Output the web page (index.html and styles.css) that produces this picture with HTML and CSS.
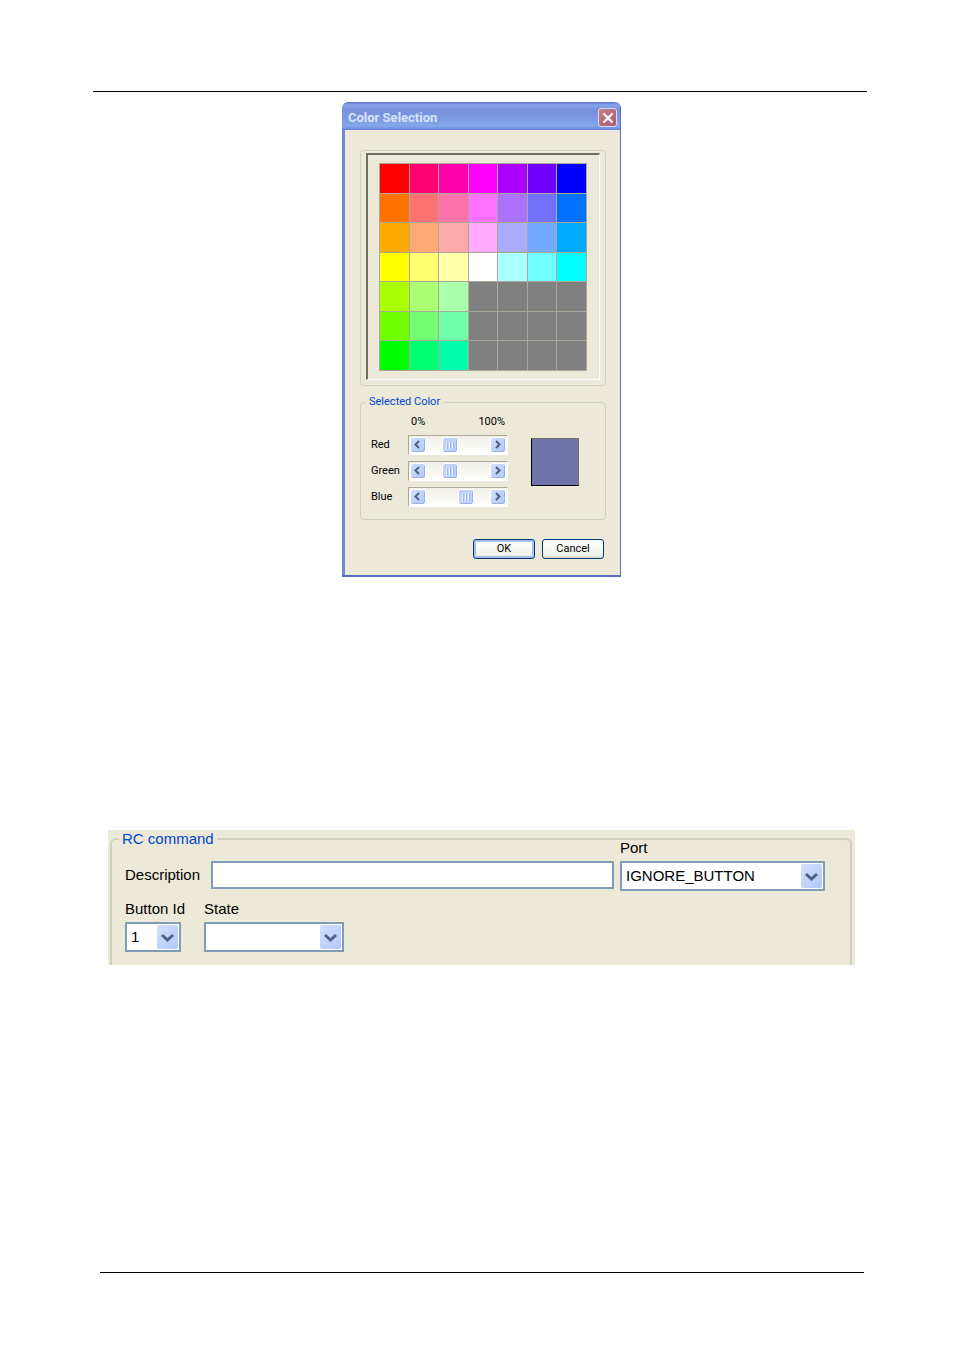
FILE: index.html
```html
<!DOCTYPE html>
<html lang="en">

<head>
    <meta charset="utf-8">
    <title>Color Selection</title>
    <link rel="stylesheet" href="styles.css">
</head>

<body>
    <header class="page-header"></header>
    <main class="page">
        <form class="dialog">
            <div class="title-bar">
                <h1>Color Selection</h1>
                <button type="button" class="close" aria-label="Close">
                    <svg viewBox="0 0 12 12" width="12" height="12">
                        <path d="M1.5 1.5l9 9M10.5 1.5l-9 9" stroke="#fff" stroke-width="2.2" />
                    </svg>
                </button>
            </div>
            <div class="dialog-body">
                <fieldset class="palette-group">
                    <div class="palette-frame">
                        <div class="palette" id="palette"></div>
                    </div>
                </fieldset>
                <fieldset class="selected-group">
                    <legend>Selected Color</legend>
                    <div class="channels">
                        <div class="scale"><span>0%</span><span>100%</span></div>
                        <label for="red">Red</label>
                        <div class="scrollbar">
                            <button type="button" aria-label="Less red"><svg viewBox="0 0 14 14"><path d="M8 3L4.500 6.500 8 10" /></svg></button>
                            <input type="range" id="red" min="0" max="100" value="33">
                            <button type="button" aria-label="More red"><svg viewBox="0 0 14 14"><path d="M5 3l3.500 3.500L5 10" /></svg></button>
                        </div>
                        <label for="green">Green</label>
                        <div class="scrollbar">
                            <button type="button" aria-label="Less green"><svg viewBox="0 0 14 14"><path d="M8 3L4.500 6.500 8 10" /></svg></button>
                            <input type="range" id="green" min="0" max="100" value="33">
                            <button type="button" aria-label="More green"><svg viewBox="0 0 14 14"><path d="M5 3l3.500 3.500L5 10" /></svg></button>
                        </div>
                        <label for="blue">Blue</label>
                        <div class="scrollbar">
                            <button type="button" aria-label="Less blue"><svg viewBox="0 0 14 14"><path d="M8 3L4.500 6.500 8 10" /></svg></button>
                            <input type="range" id="blue" min="0" max="100" value="66">
                            <button type="button" aria-label="More blue"><svg viewBox="0 0 14 14"><path d="M5 3l3.500 3.500L5 10" /></svg></button>
                        </div>
                    </div>
                    <div class="swatch"></div>
                </fieldset>
                <div class="button-container">
                    <button type="button" class="btn default">OK</button>
                    <button type="button" class="btn">Cancel</button>
                </div>
            </div>
        </form>

        <form class="rc-panel">
            <fieldset class="rc-group">
                <legend>RC command</legend>
                <div class="rc-row">
                    <label for="description" class="side-label">Description</label>
                    <input type="text" id="description" class="description">
                    <div class="field port">
                        <label for="port">Port</label>
                        <div class="select">
                            <select id="port"><option>IGNORE_BUTTON</option></select>
                            <svg viewBox="0 0 21 24"><path d="M5 10l5.500 5L16 10" /></svg>
                        </div>
                    </div>
                </div>
                <div class="rc-row second">
                    <div class="field button-id">
                        <label for="buttonId">Button Id</label>
                        <div class="select">
                            <select id="buttonId"><option>1</option></select>
                            <svg viewBox="0 0 21 24"><path d="M5 10l5.500 5L16 10" /></svg>
                        </div>
                    </div>
                    <div class="field state">
                        <label for="state">State</label>
                        <div class="select">
                            <select id="state"><option></option></select>
                            <svg viewBox="0 0 21 24"><path d="M5 10l5.500 5L16 10" /></svg>
                        </div>
                    </div>
                </div>
            </fieldset>
        </form>
    </main>
    <footer class="page-footer"></footer>
    <script>
        var colors = [
            "#ff0000", "#ff0072", "#ff00aa", "#ff00ff", "#aa00ff", "#7200ff", "#0000ff",
            "#ff7200", "#ff7272", "#ff72aa", "#ff72ff", "#aa72ff", "#7272ff", "#0072ff",
            "#ffaa00", "#ffaa72", "#ffaaaa", "#ffaaff", "#aaaaff", "#72aaff", "#00aaff",
            "#ffff00", "#ffff72", "#ffffaa", "#ffffff", "#aaffff", "#72ffff", "#00ffff",
            "#aaff00", "#aaff72", "#aaffaa", "", "", "", "",
            "#72ff00", "#72ff72", "#72ffaa", "", "", "", "",
            "#00ff00", "#00ff72", "#00ffaa", "", "", "", ""
        ];
        var palette = document.getElementById("palette");

        colors.forEach(function (color) {
            var cell = document.createElement("button");
            cell.type = "button";
            cell.setAttribute("aria-label", color || "Empty");
            if (color) {
                cell.style.backgroundColor = color;
            }
            palette.appendChild(cell);
        });
    </script>
</body>

</html>
```
FILE: styles.css
```css
* {
    box-sizing: border-box;
}

body {
    display: flex;
    flex-direction: column;
    min-height: 100vh;
    margin: 0;
    background-color: #fff;
    color: #000;
    font-family: Roboto, "Liberation Sans", sans-serif;
}

button,
input,
select {
    margin: 0;
    padding: 0;
    font: inherit;
    color: inherit;
}

fieldset {
    min-width: 0;
    margin: 0;
    border: 1px solid #d0d0bf;
    border-radius: 4px;
}

legend {
    color: #0046d5;
}

.page-header {
    height: 92px;
    margin: 0 87px 0 93px;
    border-bottom: 1px solid #000;
}

.page {
    padding: 10px 99px 0 108px;
}

.page-footer {
    height: 82px;
    margin: auto 90px 0 100px;
    border-top: 1px solid #000;
}

/* Color dialog */
.dialog {
    width: 279px;
    margin: 0 auto;
    border: solid #5c6acb;
    border-width: 0 1px 2px 0;
    border-radius: 6px 6px 0 0;
    background-color: #ece9d8;
    font-size: 11px;
    line-height: 14px;
}

.title-bar {
    display: flex;
    justify-content: space-between;
    align-items: center;
    height: 28px;
    padding: 3px 3px 0 6px;
    border-radius: 6px 6px 0 0;
    background: linear-gradient(#6070cc 0, #86a4ea 3px, #7890dc 8px, #7b98e2 16px, #83a8ea 24px, #6c7fd8 28px);
}

.title-bar h1 {
    margin: 0;
    color: #d8e4f8;
    font-size: 13px;
}

.close {
    display: flex;
    justify-content: center;
    align-items: center;
    width: 19px;
    height: 19px;
    border: 1px solid #d5daf5;
    border-radius: 3px;
    background: linear-gradient(135deg, #c58088, #a85c6c);
}

.dialog-body {
    padding: 20px 14px 16px 15px;
    border-left: 3px solid #7288da;
}

.palette-group {
    padding: 2px 5px 5px;
}

.palette-frame {
    padding: 8px 12px 8px 11px;
    border: 1px solid #fff;
    border-top: 2px solid #716f64;
    border-left: 2px solid #716f64;
}

.palette {
    display: grid;
    grid-template-columns: repeat(7, 1fr);
    grid-template-rows: repeat(7, 1fr);
    gap: 1px;
    aspect-ratio: 1;
    padding: 1px;
    background-color: #aca899;
}

.palette button {
    border: 0;
    background-color: #808080;
}

.selected-group {
    display: flex;
    justify-content: space-between;
    margin-top: 9px;
    padding: 6px 26px 12px 10px;
}

.selected-group legend {
    margin-left: -5px;
    padding: 0 3px;
}

.channels {
    display: grid;
    grid-template-columns: 37px 100px;
    row-gap: 6px;
    align-items: center;
}

.scale {
    display: flex;
    grid-column: 2;
    justify-content: space-between;
    padding: 0 3px;
}

.scrollbar {
    display: flex;
    height: 20px;
    padding: 1px;
    border: 1px solid #fff;
    border-top-color: #aca899;
    border-left-color: #aca899;
    background: linear-gradient(#f0efe8, #fefefb);
}

.scrollbar button,
.scrollbar input::-webkit-slider-thumb {
    width: 16px;
    height: 16px;
    border: 1px solid #fff;
    border-radius: 3px;
    background: linear-gradient(135deg, #d0defe, #b4c8f8);
    box-shadow: inset -1px -1px 0 #98b0e8;
}

.scrollbar svg {
    display: block;
    width: 14px;
    height: 14px;
    fill: none;
    stroke: #4d6185;
    stroke-width: 2;
}

.scrollbar input {
    flex: 1;
    min-width: 0;
    appearance: none;
    background: none;
}

.scrollbar input::-webkit-slider-thumb {
    appearance: none;
    background: repeating-linear-gradient(90deg, #eef4fe 0 1px, #9cb4ec 1px 2px, #c4d4fc 2px 3px) center / 8px 7px no-repeat, #c1d2fc;
}

.swatch {
    width: 48px;
    height: 48px;
    margin-top: 23px;
    border: 1px solid #000;
    border-top-color: #716f64;
    border-right-color: #716f64;
    background-color: #7272aa;
}

.button-container {
    display: flex;
    justify-content: flex-end;
    gap: 7px;
    margin-top: 19px;
    padding-right: 2px;
}

.btn {
    width: 62px;
    height: 20px;
    border: 1px solid #003c74;
    border-radius: 3px;
    background: linear-gradient(#fff, #f0f0ea 85%, #d6d0c5);
}

.btn.default {
    box-shadow: inset 0 0 0 2px #a5c0f0;
}

/* RC command panel */
.rc-panel {
    margin-top: 253px;
    padding: 0 3px 0 2px;
    background-color: #ece9d8;
    font-family: "Liberation Sans", Arial, sans-serif;
    font-size: 15px;
    line-height: 18px;
    white-space: nowrap;
}

.rc-group {
    padding: 0 25px 13px 13px;
    border: solid #d0d0bf;
    border-width: 2px 2px 0;
    border-radius: 6px 6px 0 0;
}

.rc-group legend {
    margin-left: -6px;
    padding: 0 3px;
}

.rc-row {
    display: flex;
    align-items: flex-start;
}

.rc-row.second {
    gap: 23px;
    margin-top: 9px;
}

.side-label {
    width: 86px;
    margin-top: 18px;
}

.description {
    flex: 1;
    min-width: 0;
    height: 28px;
    margin: 13px 6px 0 0;
    padding: 0 4px;
    border: 2px solid #7f9db9;
    background-color: #fff;
}

.field label {
    display: block;
    margin-bottom: 4px;
}

.rc-row:not(.second) .field {
    margin-top: -9px;
}

.port {
    width: 205px;
}

.button-id {
    width: 56px;
}

.state {
    width: 140px;
}

.select {
    position: relative;
}

.select select {
    display: block;
    width: 100%;
    height: 30px;
    padding: 0 24px 0 4px;
    appearance: none;
    border: 2px solid #7f9db9;
    border-radius: 0;
    background-color: #fff;
}

/* drop-down arrow laid over the right end of the select */
.select svg {
    position: absolute;
    top: 3px;
    right: 3px;
    width: 21px;
    height: 24px;
    border-radius: 2px;
    background: linear-gradient(135deg, #d3dffc, #b2c8fa);
    fill: none;
    stroke: #4d6185;
    stroke-width: 3;
    pointer-events: none;
}
```
